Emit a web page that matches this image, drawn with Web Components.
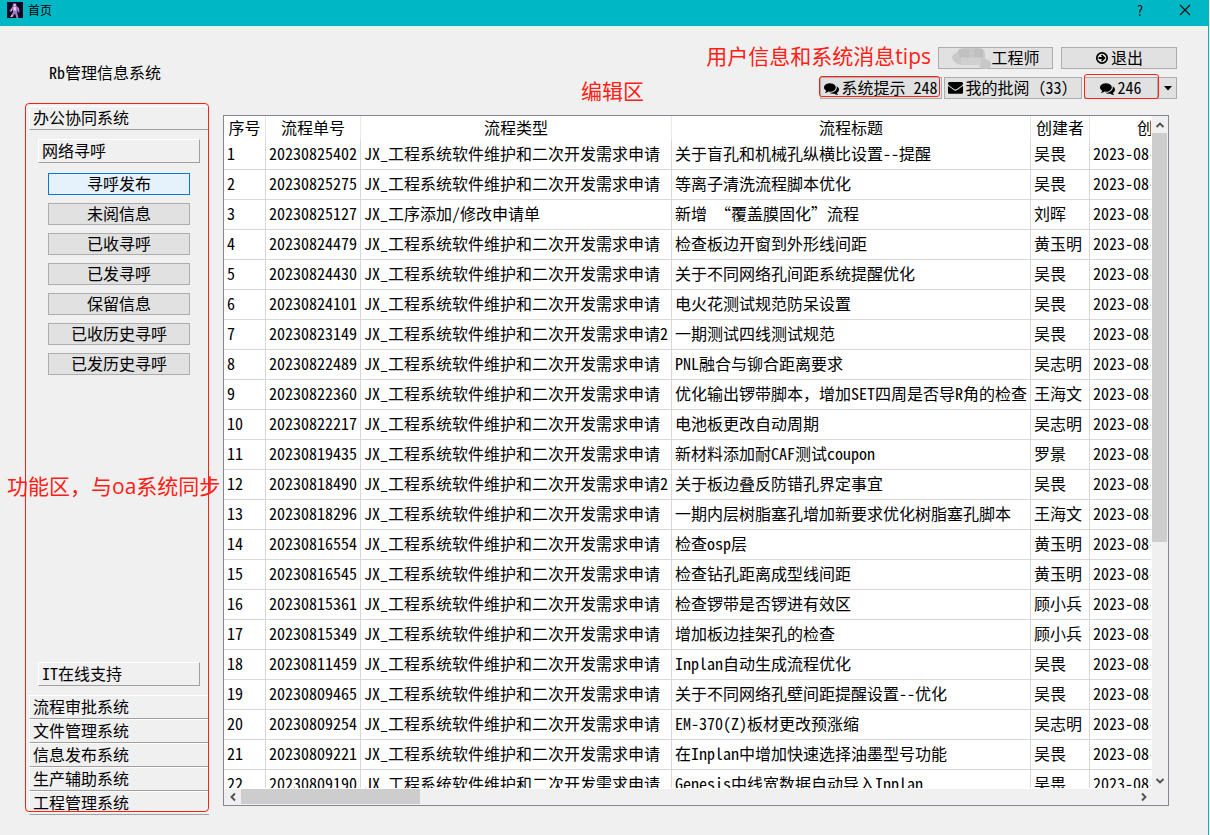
<!DOCTYPE html>
<html lang="zh-CN">
<head>
<meta charset="utf-8">
<title>首页</title>
<style>
html, body { margin: 0; height: 100%; }
body {
  font: 16px/20px "Noto Sans CJK SC", "Liberation Sans", sans-serif;
  font-feature-settings: "hwid";
  color: #000;
  --red: #ff2015;
}
</style>
</head>
<body>
<oa-window></oa-window>
<script>
const define = (name, html, setup) => {
  const tpl = document.createElement('template');
  tpl.innerHTML = html;
  customElements.define(name, class extends HTMLElement {
    connectedCallback() {
      if (this.shadowRoot) return;
      this.attachShadow({ mode: 'open' }).append(tpl.content.cloneNode(true));
      if (setup) setup(this, this.shadowRoot);
    }
  });
};

/* Half-width forms are for Latin only: full-width punctuation keeps its own. */
const keepWide = text => String(text).replace(/[，（）]/g, '<span class="wide">$&</span>');

const ICONS = {
  comments: ['0 0 1792 1792', '<path d="M1408 768q0 139-94 257t-256.500 186.500-353.500 68.500q-86 0-176-16-124 88-278 128-36 9-86 16h-3q-11 0-20.500-8t-11.500-21q-1-3-1-6.500t.5-6.500 2-6l2.500-5 3.500-5.500 4-5 4.500-5 4-4.500q5-6 23-25t26-29.500 22.500-29 25-38.500 20.500-44q-124-72-195-177t-71-224q0-139 94-257t256.500-186.500 353.500-68.500 353.500 68.500 256.500 186.500 94 257zm384 256q0 120-71 224.500t-195 176.500q10 24 20.500 44t25 38.500 22.500 29 26 29.500 23 25q1 1 4 4.500t4.500 5 4 5 3.500 5.500l2.500 5 2 6 .5 6.500-1 6.500q-3 14-13 22t-22 7q-50-7-86-16-154-40-278-128-90 16-176 16-271 0-472-132 58 4 88 4 161 0 309-45t264-129q125-92 192-212t67-254q0-77-23-152 129 71 204 178t75 230z"/>'],
  envelope: ['0 128 1792 1792', '<path d="M1792 710v794q0 66-47 113t-113 47h-1472q-66 0-113-47t-47-113v-794q44 49 101 87 362 246 497 345 57 42 92.500 65.500t94.500 48 110 24.500h2q51 0 110-24.500t94.500-48 92.500-65.500q170-123 498-345 57-39 100-87zm0-294q0 79-49 151t-122 123q-376 261-468 325-10 7-42.500 31t-54 38.500-52 32.500-57.500 27-50 9h-2q-23 0-50-9t-57.500-27-52-32.500-54-38.500-42.500-31q-91-64-262-182.500t-205-142.500q-62-42-117-115.500t-55-136.500q0-78 41.500-130t118.500-52h1472q65 0 112.500 47t47.500 113z"/>'],
  exit: ['0 0 14 14', '<circle cx="7" cy="7" r="5.200" fill="none" stroke="#000" stroke-width="1.700"/><path d="M3.600 6.100h3.700L5.900 4.700l1.200-1.200L10.600 7l-3.500 3.500-1.200-1.200 1.400-1.400H3.600z"/>'],
  caret: ['0 0 14 14', '<path d="M3 5h8l-4 4.500z"/>'],
  up: ['0 0 10 10', '<path d="M1.500 7L5 3.500 8.500 7" fill="none" stroke="#505050" stroke-width="1.900"/>'],
  down: ['0 0 10 10', '<path d="M1.500 3L5 6.500 8.500 3" fill="none" stroke="#505050" stroke-width="1.900"/>'],
  left: ['0 0 10 10', '<path d="M7 1.500L3.500 5 7 8.500" fill="none" stroke="#505050" stroke-width="1.900"/>'],
  right: ['0 0 10 10', '<path d="M3 1.500L6.500 5 3 8.500" fill="none" stroke="#505050" stroke-width="1.900"/>'],
  close: ['0 0 12 12', '<path d="M1 1l10 10M11 1L1 11" fill="none" stroke="#111" stroke-width="1.200"/>'],
  app: ['0 0 16 16', '<path fill="#0c0820" d="M0 0h16v16H0z"/><path fill="#a878c4" d="M6 1.500h3l.5 2.500 2.500 2 .5 4-1.500.5-1-3v2.500l1.500 6H9.500L8 11.500 5.500 15H3.500L6 10V7L3.500 10 2.500 9l3-4.500z"/><path fill="#e8cff2" d="M7 2h1.500v2H7zM6.500 5h2.500v3.500H6.500zM4 8l1-1 .5 1-1.500 1.500zM4 14l1-1.500.7.700L5 15H3.500z"/>']
};

define('ui-icon', `<style>:host{display:block;flex:none;width:14px;height:14px}svg{display:block;width:100%;height:100%}</style><svg aria-hidden="true"></svg>`,
  (el, root) => {
    const [box, body] = ICONS[el.getAttribute('name')];
    const svg = root.querySelector('svg');
    svg.setAttribute('viewBox', box);
    svg.innerHTML = body;
  });

define('push-button', `<style>
:host{display:block}
button{box-sizing:border-box;display:flex;align-items:center;justify-content:center;gap:2px;width:100%;height:22px;margin:0;padding:0 0 2px;
 border:1px solid #adadad;border-radius:0;background:#e1e1e1;color:inherit;font:inherit;font-feature-settings:inherit;white-space:nowrap}
:host([active]) button{background:#e5f1fb;border-color:#0078d7}
::slotted(ui-icon){margin-top:2px}
</style><button type="button"><slot></slot></button>`,
  (el, root) => { const l = el.getAttribute('label'); if (l) root.querySelector('button').setAttribute('aria-label', l); });

define('title-bar', `<style>
:host{display:flex;box-sizing:border-box;height:26px;padding:0 16px 6px 7px;background:#00b7c6;align-items:center;gap:5px;font-size:12px}
ui-icon[name=app]{width:16px;height:16px}
.grow{flex:1}
button{display:grid;place-items:center;width:16px;height:20px;padding:0;border:0;background:none;font:inherit;font-size:14px;color:#111;margin-left:24px}
button[aria-label="关闭"]{margin-left:29px}
ui-icon[name=close]{width:12px;height:12px}
:host{padding-right:16px}
</style>
<ui-icon name="app"></ui-icon><slot></slot><span class="grow"></span>
<button type="button" aria-label="帮助">?</button><button type="button" aria-label="关闭" style="margin-left:24px"><ui-icon name="close"></ui-icon></button>`);

/* A raised header of a tool box; "boxed" adds the shaded right edge. */
define('tool-tab', `<style>
:host{display:block}
button{display:block;box-sizing:border-box;width:100%;height:24px;padding:0 3px 2px;border:1px solid #fff;border-bottom-color:#a0a0a0;border-right:0;background:#f0f0f0;color:inherit;text-align:left;font:inherit;font-feature-settings:inherit}
:host([boxed]) button{border-right:1px solid #a0a0a0}
</style><button type="button"><slot></slot></button>`);

define('tool-box', `<style>
:host{position:relative;display:flex;flex-direction:column;min-height:0}
.page{flex:1;display:flex;flex-direction:column;padding:9px}
.list{flex:1;display:flex;flex-direction:column;gap:8px;padding:10px}
.frame{position:absolute;inset:-3px 0 3px -4px;border:1px solid var(--red);border-radius:4px;pointer-events:none}
</style>
<tool-tab>办公协同系统</tool-tab>
<div class="page">
 <tool-tab boxed>网络寻呼</tool-tab>
 <div class="list">
  <push-button active>寻呼发布</push-button><push-button>未阅信息</push-button><push-button>已收寻呼</push-button>
  <push-button>已发寻呼</push-button><push-button>保留信息</push-button><push-button>已收历史寻呼</push-button><push-button>已发历史寻呼</push-button>
 </div>
 <tool-tab boxed>IT在线支持</tool-tab>
</div>
<tool-tab>流程审批系统</tool-tab><tool-tab>文件管理系统</tool-tab><tool-tab>信息发布系统</tool-tab><tool-tab>生产辅助系统</tool-tab><tool-tab>工程管理系统</tool-tab>
<div class="frame"></div>`);

define('red-note', `<style>
:host{position:absolute;color:var(--red);font:21px/28px "Open Sans","Noto Sans CJK SC",sans-serif;font-feature-settings:normal;white-space:nowrap;pointer-events:none}
</style><slot></slot>`);

define('status-bar', `<style>
:host{display:flex;flex-direction:column;align-items:flex-end;gap:8px}
.row{position:relative;display:flex;gap:2px}
.top{gap:8px}
.user{width:115px}.quit{width:116px}
.tips{position:relative;width:122px}.mail{width:138px}.chat{width:74px}.more{width:19px}
.pair{display:flex;position:relative}
.frame{position:absolute;border:1px solid var(--red);border-radius:3px;pointer-events:none}
.f1{inset:-1px 2px 2px -1px}.f2{inset:-3px 18px 0 0}
ui-icon.w{width:15px;height:15px}
.blur{width:42px;height:22px;flex:none;margin:2px -4px 0 0}
.wide{font-feature-settings:normal}
red-note{right:246px;top:-5px}
</style>
<div class="row top">
 <red-note>用户信息和系统消息tips</red-note>
 <push-button class="user"><svg class="blur" viewBox="0 0 42 22" aria-hidden="true"><path fill="#c8c8c8" d="M1 11q0-4 4-5 2-4 7-5h18q4 2 4 7v4q6 1 6 5 0 5-6 5-5 0-6-4H11q-8-1-10-7z"/><path fill="#c0c0c0" d="M8 2h10v8H8zM23 2h9v8h-9z"/><path fill="#d0d0d0" d="M10 11h20v7H10z"/></svg>工程师</push-button>
 <push-button class="quit"><ui-icon name="exit"></ui-icon>退出</push-button>
</div>
<div class="row">
 <div class="tips"><push-button><ui-icon class="w" name="comments"></ui-icon>系统提示 248</push-button><span class="frame f1"></span></div>
 <push-button class="mail"><ui-icon class="w" name="envelope"></ui-icon><span>我的批阅<span class="wide">（</span>33<span class="wide">）</span></span></push-button>
 <div class="pair">
  <push-button class="chat"><ui-icon class="w" name="comments"></ui-icon>246</push-button>
  <push-button class="more" label="更多"><ui-icon name="caret"></ui-icon></push-button>
  <span class="frame f2"></span>
 </div>
</div>`);

define('scroll-bar', `<style>
:host{display:flex;flex-direction:column;background:#f0f0f0;min-width:0;min-height:0}
:host([horizontal]){flex-direction:row}
button{flex:none;display:grid;place-items:center;width:16px;height:17px;padding:0;border:0;background:none}
:host([horizontal]) button{width:17px;height:16px}
ui-icon{width:10px;height:10px}
.track{flex:1;min-width:0;min-height:0}
.thumb{width:15px;height:64%;background:#cdcdcd}
:host([horizontal]) .thumb{width:20%;height:15px}
</style><button type="button" class="a"></button><div class="track"><div class="thumb"></div></div><button type="button" class="b"></button>`,
  (el, root) => {
    const h = el.hasAttribute('horizontal');
    root.querySelector('.a').innerHTML = `<ui-icon name="${h ? 'left' : 'up'}"></ui-icon>`;
    root.querySelector('.b').innerHTML = `<ui-icon name="${h ? 'right' : 'down'}"></ui-icon>`;
    root.querySelector('.a').setAttribute('aria-label', h ? '向左' : '向上');
    root.querySelector('.b').setAttribute('aria-label', h ? '向右' : '向下');
  });

const KIND = 'JX_工程系统软件维护和二次开发需求申请';
const ROWS = [
 ['20230825402', KIND, '关于盲孔和机械孔纵横比设置--提醒', '吴畏'],
 ['20230825275', KIND, '等离子清洗流程脚本优化', '吴畏'],
 ['20230825127', 'JX_工序添加/修改申请单', '新增 “覆盖膜固化”流程', '刘晖'],
 ['20230824479', KIND, '检查板边开窗到外形线间距', '黄玉明'],
 ['20230824430', KIND, '关于不同网络孔间距系统提醒优化', '吴畏'],
 ['20230824101', KIND, '电火花测试规范防呆设置', '吴畏'],
 ['20230823149', KIND + '2', '一期测试四线测试规范', '吴畏'],
 ['20230822489', KIND, 'PNL融合与铆合距离要求', '吴志明'],
 ['20230822360', KIND, '优化输出锣带脚本，增加SET四周是否导R角的检查', '王海文'],
 ['20230822217', KIND, '电池板更改自动周期', '吴志明'],
 ['20230819435', KIND, '新材料添加耐CAF测试coupon', '罗景'],
 ['20230818490', KIND + '2', '关于板边叠反防错孔界定事宜', '吴畏'],
 ['20230818296', KIND, '一期内层树脂塞孔增加新要求优化树脂塞孔脚本', '王海文'],
 ['20230816554', KIND, '检查osp层', '黄玉明'],
 ['20230816545', KIND, '检查钻孔距离成型线间距', '黄玉明'],
 ['20230815361', KIND, '检查锣带是否锣进有效区', '顾小兵'],
 ['20230815349', KIND, '增加板边挂架孔的检查', '顾小兵'],
 ['20230811459', KIND, 'Inplan自动生成流程优化', '吴畏'],
 ['20230809465', KIND, '关于不同网络孔壁间距提醒设置--优化', '吴畏'],
 ['20230809254', KIND, 'EM-370(Z)板材更改预涨缩', '吴志明'],
 ['20230809221', KIND, '在Inplan中增加快速选择油墨型号功能', '吴畏'],
 ['20230809190', KIND, 'Genesis中线宽数据自动导入Inplan', '吴畏']
];

define('flow-table', `<style>
:host{display:grid;grid-template:minmax(0,1fr) 16px / minmax(0,1fr) 16px;border:1px solid #828790;background:#f0f0f0;min-height:0}
.view{overflow:hidden;background:#fff;border:solid #fff;border-width:0 1px 1px 0}
table{table-layout:fixed;border-collapse:separate;border-spacing:0;width:1025px}
th,td{box-sizing:border-box;padding:0 0 3px 3px;border-right:1px solid #d8d8d8;white-space:nowrap;font-weight:400;overflow:hidden}
th{height:24px;padding:0 0 2px;text-align:center;border-right-color:#e8e8e8}
td{height:30px;border-bottom:1px solid #d8d8d8;text-align:left}
.wide{font-feature-settings:normal}
</style>
<div class="view"><table>
<colgroup><col style="width:42px"><col style="width:95px"><col style="width:311px"><col style="width:359px"><col style="width:59px"><col style="width:159px"></colgroup>
<thead><tr><th>序号</th><th>流程单号</th><th>流程类型</th><th>流程标题</th><th>创建者</th><th>创建时间</th></tr></thead><tbody></tbody></table></div>
<scroll-bar></scroll-bar><scroll-bar horizontal></scroll-bar>`,
  (el, root) => {
    const body = root.querySelector('tbody');
    ROWS.forEach((row, i) => {
      const id = row[0];
      const tr = body.insertRow();
      for (const text of [i + 1, ...row, `${id.slice(0, 4)}-${id.slice(4, 6)}-${id.slice(6, 8)}`]) tr.insertCell().innerHTML = keepWide(text);
    });
  });

define('oa-window', `<style>
:host{display:flex;flex-direction:column;box-sizing:border-box;height:100vh;min-height:640px;background:#f0f0f0;border-right:1px solid #fff;overflow:hidden}
.body{flex:1;min-height:0;display:grid;grid-template-columns:209px minmax(0,1fr);gap:14px;border-right:1px solid #00b7c6}
aside{position:relative;z-index:1;display:flex;flex-direction:column;padding:34px 0 20px 29px;min-height:0}
h1{margin:0 20px 22px;font-size:16px;line-height:24px;font-weight:400}
tool-box{flex:1}
main{position:relative;display:flex;flex-direction:column;padding:21px 39px 29px 0;min-height:0}
status-bar{margin:0 -8px 16px 0}
flow-table{flex:1}
aside red-note{left:7px;top:446px}
main red-note{left:358px;top:51px}
</style>
<title-bar>首页</title-bar>
<div class="body">
 <aside><h1>Rb管理信息系统</h1><tool-box></tool-box><red-note>功能区，与oa系统同步</red-note></aside>
 <main><status-bar></status-bar><red-note>编辑区</red-note><flow-table></flow-table></main>
</div>`);
</script>
</body>
</html>
